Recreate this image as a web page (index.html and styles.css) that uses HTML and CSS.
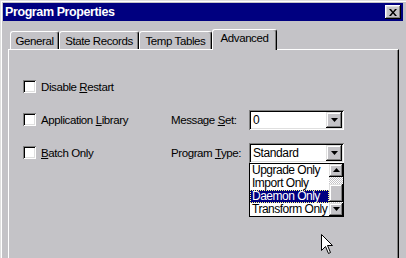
FILE: index.html
```html
<!DOCTYPE html>
<html lang="en">
<head>
  <meta charset="UTF-8" />
  <title>Program Properties</title>
  <link rel="stylesheet" href="styles.css">
</head>
<body>
  <div class="window">
    <div class="titlebar">
      <span class="title">Program Properties</span>
      <div class="close" title="Close">
        <svg width="8" height="7" viewBox="0 0 8 7"><path d="M0 0h2l2 2.5 2-2.5h2l-3 3.5 3 3.5h-2l-2-2.5-2 2.5h-2l3-3.5z" fill="#000"/></svg>
      </div>
    </div>

    <div class="tabs">
      <div class="tab tab-general">General</div>
      <div class="tab tab-state">State Records</div>
      <div class="tab tab-temp">Temp Tables</div>
      <div class="tab tab-advanced active">Advanced</div>
    </div>

    <div class="panel">
      <div class="grid">
        <label class="check"><span class="box"></span><span>Disable <u>R</u>estart</span></label>
        <span></span>
        <span></span>

        <label class="check"><span class="box"></span><span>Application <u>L</u>ibrary</span></label>
        <span class="field-label">Message <u>S</u>et:</span>
        <div class="combo">
          <span class="combo-value">0</span>
          <span class="btn combo-btn"><svg width="7" height="4" viewBox="0 0 7 4"><path d="M0 0h7l-3.5 4z" fill="#000"/></svg></span>
        </div>

        <label class="check"><span class="box"></span><span><u>B</u>atch Only</span></label>
        <span class="field-label">Program <u>T</u>ype:</span>
        <div class="combo">
          <span class="combo-value">Standard</span>
          <span class="btn combo-btn"><svg width="7" height="4" viewBox="0 0 7 4"><path d="M0 0h7l-3.5 4z" fill="#000"/></svg></span>

          <div class="dropdown">
            <div class="options">
              <div class="option">Upgrade Only</div>
              <div class="option">Import Only</div>
              <div class="option selected">Daemon Only</div>
              <div class="option">Transform Only</div>
            </div>
            <div class="scrollbar">
              <span class="btn sb-btn"><svg width="7" height="4" viewBox="0 0 7 4"><path d="M3.5 0l3.5 4h-7z" fill="#000"/></svg></span>
              <span class="sb-track"></span>
              <span class="btn sb-thumb"></span>
              <span class="sb-track rest"></span>
              <span class="btn sb-btn"><svg width="7" height="4" viewBox="0 0 7 4"><path d="M0 0h7l-3.5 4z" fill="#000"/></svg></span>
            </div>
          </div>
        </div>
      </div>
    </div>

    <svg class="cursor" width="13" height="20" viewBox="0 0 13 20"><path d="M0.5 0.5V16.5L4.5 12.5L7.5 19.5L9.5 18.5L6.5 11.5H11.5Z" fill="#fff" stroke="#000"/></svg>
  </div>
</body>
</html>
```

FILE: styles.css
```css
body {
  margin: 0;
  font-family: "Liberation Sans", Arial, sans-serif;
  font-size: 11.5px;
  letter-spacing: -0.4px;
  color: #000;
  background: #c4c3c7;
}

.window {
  position: relative;
  width: 406px;
  height: 258px;
  box-sizing: border-box;
  overflow: hidden;
  display: flex;
  flex-direction: column;
  background: #c4c3c7;
  border-top: 1px solid #dfdfdf;
  border-left: 1px solid #dfdfdf;
  box-shadow: inset 1px 1px #fff;
  padding: 2px 0 0 2px;
}

.titlebar {
  height: 18px;
  margin-right: 3px;
  padding: 0 2px;
  display: flex;
  align-items: center;
  justify-content: space-between;
  background: #000080;
  color: #fff;
}

.title {
  font-weight: bold;
  font-size: 12.5px;
  letter-spacing: -0.4px;
}

.btn {
  display: flex;
  align-items: center;
  justify-content: center;
  box-sizing: border-box;
  background: #c4c3c7;
  box-shadow: inset -1px -1px #000, inset 1px 1px #dfdfdf, inset -2px -2px #808080, inset 2px 2px #fff;
}

.close {
  width: 16px;
  height: 14px;
  display: flex;
  align-items: center;
  justify-content: center;
  background: #c4c3c7;
  box-shadow: inset -1px -1px #000, inset 1px 1px #fff, inset -2px -2px #808080, inset 2px 2px #dfdfdf;
}

/* tabs */
.tabs {
  display: flex;
  align-items: flex-end;
  height: 20px;
  margin: 8px 0 0 7px;
}

.tab {
  height: 18px;
  box-sizing: border-box;
  display: flex;
  align-items: center;
  justify-content: center;
  white-space: nowrap;
  border-top: 1px solid #fff;
  border-left: 1px solid #fff;
  border-right: 1px solid #000;
  border-radius: 3px 3px 0 0;
  box-shadow: inset -1px 0 #808080;
  background: #c4c3c7;
}

.tab-general { width: 49px; }
.tab-state { width: 80px; }
.tab-temp { width: 73px; }
.tab-advanced { width: 65px; }

.tab.active {
  position: relative;
  z-index: 2;
  height: 21px;
  margin-bottom: -1px;
  padding-bottom: 4px;
}

/* panel */
.panel {
  flex: 1;
  margin: 0 7px 0 5px;
  padding: 20px 0 0 14px;
  border-top: 1px solid #fff;
  border-left: 1px solid #fff;
  border-right: 1px solid #000;
  box-shadow: inset -1px 0 #808080;
}

.grid {
  display: grid;
  grid-template-columns: 148px 78px 95px;
  grid-auto-rows: 33px;
  align-items: center;
}

.check {
  display: flex;
  align-items: center;
  gap: 5px;
  white-space: nowrap;
}

.field-label {
  white-space: nowrap;
}

.box {
  width: 13px;
  height: 13px;
  box-sizing: border-box;
  background: #fff;
  box-shadow: inset 1px 1px #808080, inset -1px -1px #fff, inset 2px 2px #000, inset -2px -2px #dfdfdf;
}

.combo {
  position: relative;
  width: 95px;
  height: 20px;
  box-sizing: border-box;
  padding: 2px;
  display: flex;
  align-items: center;
  background: #fff;
  box-shadow: inset 1px 1px #808080, inset -1px -1px #fff, inset 2px 2px #000, inset -2px -2px #dfdfdf;
}

.combo-value {
  flex: 1;
  padding-left: 2px;
  font-size: 12px;
}

.combo-btn {
  width: 16px;
  height: 16px;
}

/* open list */
.dropdown {
  position: absolute;
  z-index: 3;
  left: 0;
  top: 20px;
  width: 95px;
  height: 54px;
  box-sizing: border-box;
  display: flex;
  border: 1px solid #000;
  background: #fff;
}

.options {
  flex: 1;
  overflow: hidden;
}

.option {
  height: 13px;
  line-height: 13px;
  padding-left: 2px;
  font-size: 12px;
  letter-spacing: -0.5px;
  white-space: nowrap;
}

.option.selected {
  background: #000080;
  color: #fff;
  outline: 1px dotted #ffff80;
  outline-offset: -1px;
}

.scrollbar {
  width: 14px;
  display: flex;
  flex-direction: column;
}

.sb-btn {
  height: 13px;
}

.sb-track {
  height: 7px;
  background: repeating-conic-gradient(#fff 0 25%, #c4c3c7 0 50%) 0 0 / 2px 2px;
}

.sb-track.rest {
  height: auto;
  flex: 1;
}

.sb-thumb {
  height: 18px;
}

.cursor {
  position: absolute;
  left: 320px;
  top: 233px;
}
```
